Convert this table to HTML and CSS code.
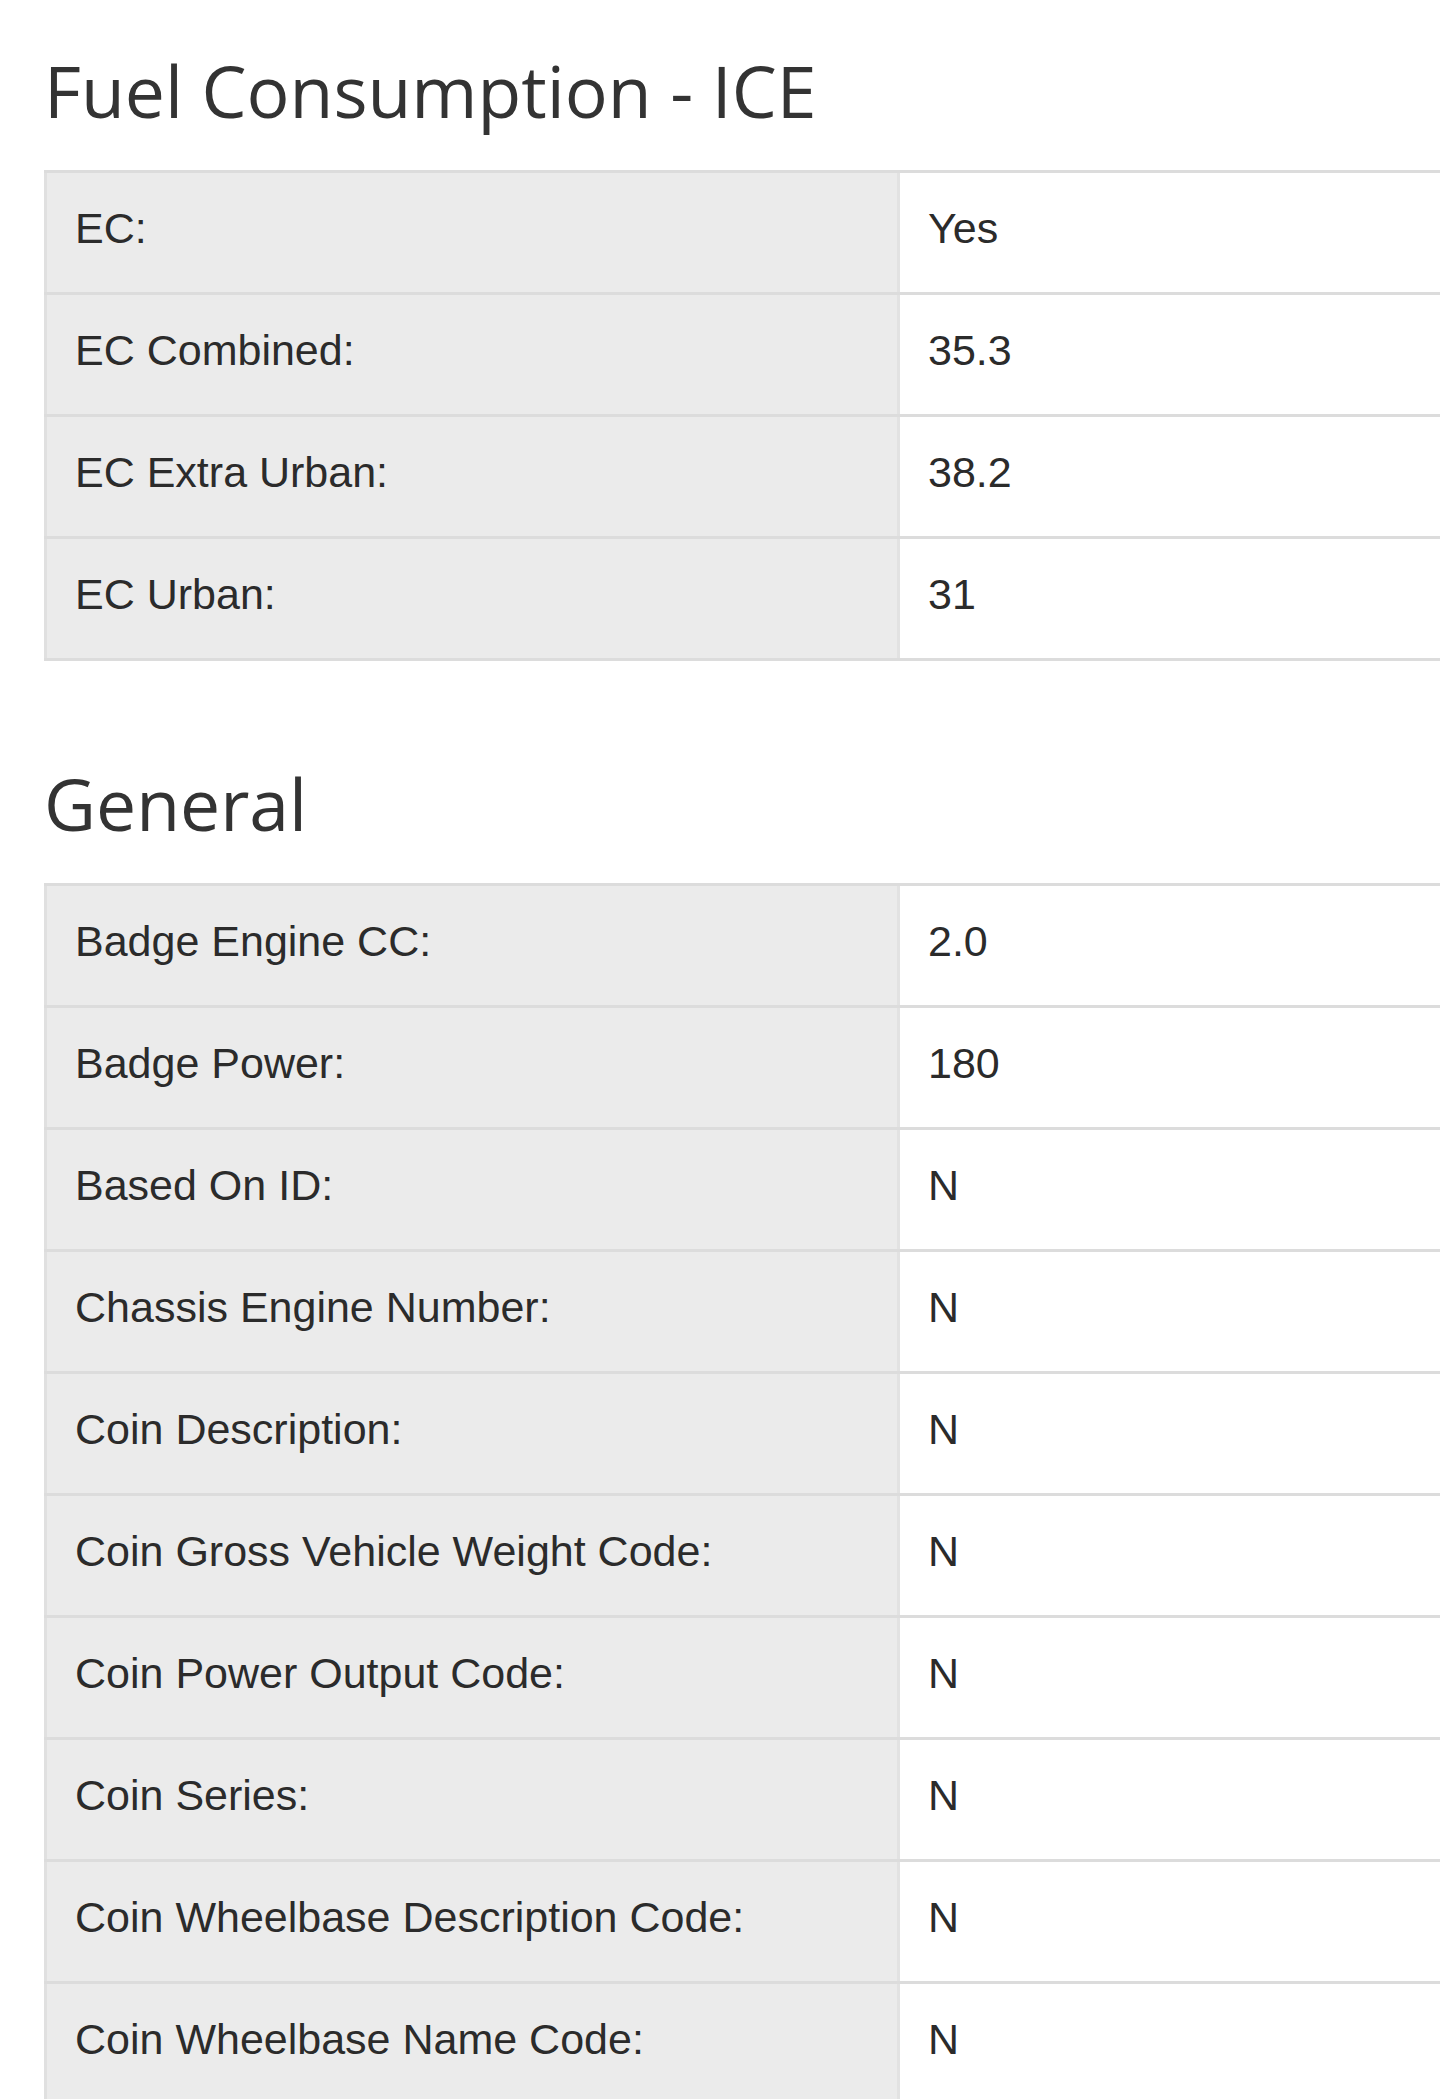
FILE: index.html
```html
<!DOCTYPE html>
<html lang="en">
<head>
<meta charset="utf-8">
<title>Vehicle specification</title>
<link rel="stylesheet" href="styles.css">
</head>
<body>
<main class="page">
  <section class="spec-section">
    <h2 class="spec-title">Fuel Consumption - ICE</h2>
    <div class="spec-table">
      <div class="spec-row"><div class="spec-label">EC:</div><div class="spec-value">Yes</div></div>
      <div class="spec-row"><div class="spec-label">EC Combined:</div><div class="spec-value">35.3</div></div>
      <div class="spec-row"><div class="spec-label">EC Extra Urban:</div><div class="spec-value">38.2</div></div>
      <div class="spec-row"><div class="spec-label">EC Urban:</div><div class="spec-value">31</div></div>
    </div>
  </section>
  <section class="spec-section">
    <h2 class="spec-title">General</h2>
    <div class="spec-table">
      <div class="spec-row"><div class="spec-label">Badge Engine CC:</div><div class="spec-value">2.0</div></div>
      <div class="spec-row"><div class="spec-label">Badge Power:</div><div class="spec-value">180</div></div>
      <div class="spec-row"><div class="spec-label">Based On ID:</div><div class="spec-value">N</div></div>
      <div class="spec-row"><div class="spec-label">Chassis Engine Number:</div><div class="spec-value">N</div></div>
      <div class="spec-row"><div class="spec-label">Coin Description:</div><div class="spec-value">N</div></div>
      <div class="spec-row"><div class="spec-label">Coin Gross Vehicle Weight Code:</div><div class="spec-value">N</div></div>
      <div class="spec-row"><div class="spec-label">Coin Power Output Code:</div><div class="spec-value">N</div></div>
      <div class="spec-row"><div class="spec-label">Coin Series:</div><div class="spec-value">N</div></div>
      <div class="spec-row"><div class="spec-label">Coin Wheelbase Description Code:</div><div class="spec-value">N</div></div>
      <div class="spec-row"><div class="spec-label">Coin Wheelbase Name Code:</div><div class="spec-value">N</div></div>
    </div>
  </section>
</main>
</body>
</html>
```

FILE: styles.css
```css
* {
  box-sizing: border-box;
}

html, body {
  margin: 0;
  padding: 0;
  background: #ffffff;
}

body {
  font-family: "Liberation Sans", Arial, sans-serif;
  color: #2b2b2b;
}

.page {
  display: flex;
  flex-direction: column;
  gap: 104px;
  padding: 52px 0 0 44px;
}

.spec-section {
  display: flex;
  flex-direction: column;
  gap: 41px;
}

.spec-title {
  margin: 0;
  font-family: "Open Sans", "Noto Sans", sans-serif;
  font-weight: 400;
  font-size: 71.5px;
  line-height: 77px;
  color: #333333;
}

.spec-table {
  border-top: 3px solid #dcdcdc;
  border-bottom: 3px solid #dcdcdc;
}

.spec-row {
  display: grid;
  grid-template-columns: 856px 1fr;
}

.spec-row + .spec-row {
  border-top: 3px solid #dcdcdc;
}

.spec-label,
.spec-value {
  font-size: 43px;
  line-height: 46px;
  padding: 32px 20px 41px 28px;
  white-space: nowrap;
}

.spec-label {
  background: #ebebeb;
  border-left: 3px solid #e0e0e0;
  border-right: 3px solid #e2e2e2;
}

.spec-value {
  background: #ffffff;
}
```
